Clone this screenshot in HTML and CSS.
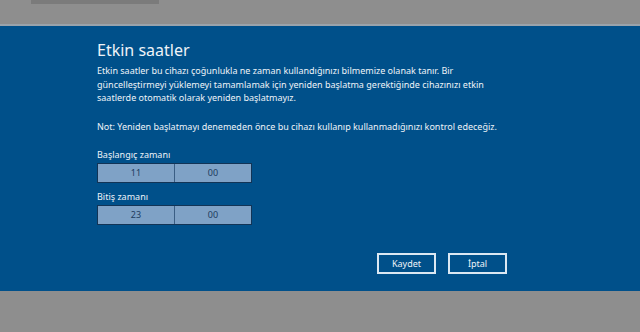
FILE: index.html
```html
<!DOCTYPE html>
<html lang="tr">
	<head>
		<meta charset="UTF-8">
		<title>Etkin saatler</title>
		<link rel="stylesheet" href="styles.css">
	</head>
	<body>
		<div class="topbar">
			<div class="tab"></div>
		</div>
		<div class="panel">
			<div class="content">
				<h1 class="title">Etkin saatler</h1>
				<p class="desc">Etkin saatler bu cihazı çoğunlukla ne zaman kullandığınızı bilmemize olanak tanır. Bir güncelleştirmeyi yüklemeyi tamamlamak için yeniden başlatma gerektiğinde cihazınızı etkin saatlerde otomatik olarak yeniden başlatmayız.</p>
				<p class="note">Not: Yeniden başlatmayı denemeden önce bu cihazı kullanıp kullanmadığınızı kontrol edeceğiz.</p>
				<div class="field">
					<div class="label">Başlangıç zamanı</div>
					<div class="time">
						<span class="part">11</span>
						<span class="part">00</span>
					</div>
				</div>
				<div class="field">
					<div class="label">Bitiş zamanı</div>
					<div class="time">
						<span class="part">23</span>
						<span class="part">00</span>
					</div>
				</div>
				<div class="actions">
					<button class="btn">Kaydet</button>
					<button class="btn">İptal</button>
				</div>
			</div>
		</div>
		<div class="bottom"></div>
	</body>
</html>
```

FILE: styles.css
```css
html, body{
	margin: 0;
	height: 100%;
	background: #8e8e8e;
	font-family: "Noto Sans", "Open Sans", sans-serif;
	color: #eef3f8;
}
.topbar{
	height: 26px;
	padding-left: 31px;
	border-bottom: 2px solid #9aa3ab;
	box-sizing: border-box;
}
.tab{
	width: 128px;
	height: 4px;
	background: #7b7b7b;
}
.panel{
	background: #00508a;
	height: 265px;
	padding-top: 12px;
	box-sizing: border-box;
}
.content{
	margin-left: 97px;
	width: 410px;
}
.title{
	margin: 0;
	font-size: 16px;
	font-weight: normal;
	line-height: 24px;
}
.desc{
	margin: 2px 0 0;
	font-size: 9px;
	line-height: 13.5px;
	width: 392px;
}
.note{
	margin: 15px 0 0;
	font-size: 9px;
	line-height: 13.5px;
}
.field{
	margin-top: 14px;
}
.field + .field{
	margin-top: 6px;
}
.label{
	font-size: 9px;
	line-height: 16px;
}
.time{
	display: flex;
	width: 155px;
	height: 20px;
	border: 1px solid #123456;
	box-sizing: border-box;
	background: #7fa2c6;
}
.part{
	flex: 1;
	text-align: center;
	font-size: 9px;
	line-height: 18px;
	color: #1d3c5e;
}
.part + .part{
	border-left: 1px solid #3a5e84;
}
.actions{
	display: flex;
	justify-content: flex-end;
	gap: 12px;
	margin-top: 28px;
}
.btn{
	width: 59px;
	height: 21px;
	border: 2px solid #dbe8f3;
	background: transparent;
	color: #eef3f8;
	font-family: "Noto Sans", "Open Sans", sans-serif;
	font-size: 9px;
	padding: 0;
}
```
